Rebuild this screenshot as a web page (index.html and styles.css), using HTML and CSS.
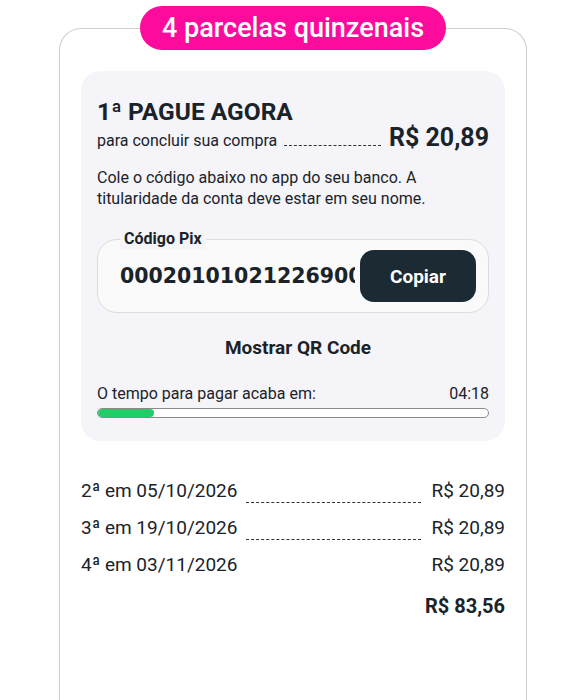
FILE: index.html
```html
<!DOCTYPE html>
<html lang="pt-BR">

<head>
    <meta charset="UTF-8">
    <meta name="viewport" content="width=device-width, initial-scale=1.0">
    <title>Parcelas</title>
    <link rel="stylesheet" href="styles.css">
</head>

<body>
    <div class="card">
        <div class="badge">4 parcelas quinzenais</div>

        <!-- primeira parcela -->
        <div class="first">
            <h2 class="first-title">1ª PAGUE AGORA</h2>
            <div class="first-line">
                <span class="first-sub">para concluir sua compra</span>
                <span class="dots"></span>
                <span class="first-price">R$ 20,89</span>
            </div>
            <p class="hint">Cole o código abaixo no app do seu banco. A titularidade da conta deve estar em seu nome.</p>

            <div class="pix">
                <span class="pix-label">Código Pix</span>
                <span class="pix-code">00020101021226900014br.gov.bcb.pix</span>
                <button class="copy-btn">Copiar</button>
            </div>

            <div class="qr">Mostrar QR Code</div>

            <div class="timer">
                <span>O tempo para pagar acaba em:</span>
                <span>04:18</span>
            </div>
            <div class="bar">
                <div class="bar-fill"></div>
            </div>
        </div>

        <!-- demais parcelas -->
        <ul class="rows">
            <li class="row">
                <span>2ª em 05/10/2026</span>
                <span class="dots row-dots"></span>
                <span>R$ 20,89</span>
            </li>
            <li class="row">
                <span>3ª em 19/10/2026</span>
                <span class="dots row-dots"></span>
                <span>R$ 20,89</span>
            </li>
            <li class="row">
                <span>4ª em 03/11/2026</span>
                <span class="spacer"></span>
                <span>R$ 20,89</span>
            </li>
        </ul>
        <div class="total">R$ 83,56</div>
    </div>
</body>

</html>
```

FILE: styles.css
```css
* {
    box-sizing: border-box;
}

body {
    margin: 0;
    background: #fff;
    color: #1a2329;
    font-family: Roboto, "Liberation Sans", sans-serif;
    overflow: hidden;
}

/* cartão externo */
.card {
    width: 468px;
    min-height: 700px;
    margin: 28px 0 0 59px;
    border: 1.5px solid #cdcdcd;
    border-bottom: none;
    border-radius: 22px 22px 0 0;
}

.badge {
    width: 306px;
    height: 44px;
    margin: -23px auto 0 80px;
    border-radius: 22px;
    background: #fc0b9c;
    color: #fff;
    font-size: 27px;
    font-weight: 500;
    display: flex;
    align-items: center;
    justify-content: center;
}

/* bloco cinza */
.first {
    width: 424px;
    margin: 21px 0 0 21px;
    padding: 27px 16px 23px;
    background: #f4f4f9;
    border-radius: 20px;
}

.first-title {
    margin: 0;
    font-size: 24.5px;
    font-weight: 700;
    line-height: 28px;
}

.first-line {
    display: flex;
    align-items: baseline;
    margin-top: 1px;
    line-height: 22px;
}

.first-sub {
    font-size: 16px;
}

.dots {
    flex: 1;
    border-bottom: 1.5px dashed #333;
    margin: 0 8px 0 7px;
}

.first-price {
    font-size: 25px;
    font-weight: 700;
}

.hint {
    margin: 15px 0 0;
    font-size: 16px;
    line-height: 21px;
}

/* campo do pix */
.pix {
    margin-top: 30px;
    height: 74px;
    border: 1px solid #dcdcdc;
    border-radius: 20px;
    background: #fafafa;
    display: flex;
    align-items: center;
    padding: 0 12px 0 22px;
    gap: 5px;
    position: relative;
}

.pix-label {
    position: absolute;
    left: 22px;
    top: -11px;
    padding: 0 4px;
    background: #f4f4f9;
    font-size: 16px;
    font-weight: 700;
    line-height: 20px;
}

.pix-code {
    flex: 1;
    overflow: hidden;
    white-space: nowrap;
    font-family: "DejaVu Sans", Roboto, sans-serif;
    font-size: 20.5px;
    font-weight: 700;
}

.copy-btn {
    width: 116px;
    height: 52px;
    border: none;
    border-radius: 14px;
    background: #1b2a33;
    color: #fff;
    font-family: inherit;
    font-size: 19px;
    font-weight: 700;
}

.qr {
    margin-top: 23px;
    padding-left: 10px;
    text-align: center;
    font-size: 19px;
    font-weight: 700;
    line-height: 24px;
}

.timer {
    margin-top: 24px;
    display: flex;
    justify-content: space-between;
    font-size: 16px;
    line-height: 20px;
}

.bar {
    margin-top: 4px;
    height: 10px;
    border: 1px solid #8a8a8a;
    border-radius: 5px;
    background: #fff;
    overflow: hidden;
}

.bar-fill {
    width: 56px;
    height: 100%;
    background: #22cc66;
    border-radius: 5px;
}

/* lista */
.rows {
    list-style: none;
    margin: 31px 0 0 21px;
    padding: 0;
    width: 424px;
}

.row {
    display: flex;
    align-items: baseline;
    font-size: 19px;
    line-height: 37px;
    height: 37px;
}

.row-dots {
    margin: 0 10px 0 9px;
    position: relative;
    top: 6px;
}

.spacer {
    flex: 1;
}

.total {
    width: 424px;
    margin: 11px 0 0 21px;
    text-align: right;
    font-size: 20px;
    font-weight: 700;
    line-height: 24px;
}
```
